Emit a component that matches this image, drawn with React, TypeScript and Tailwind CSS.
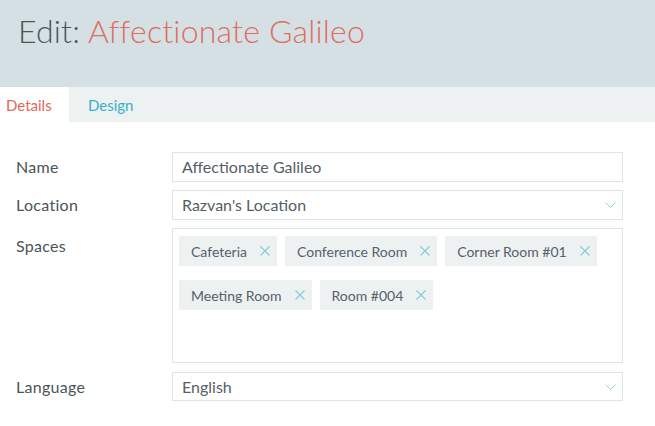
import React from "react";

const font = { fontFamily: "Lato, 'Open Sans', sans-serif" };

function XIcon() {
  return (
    <svg width="10" height="10" viewBox="0 0 10 10" className="ml-[13px] shrink-0">
      <path d="M0.5 0.5 L9.5 9.5 M9.5 0.5 L0.5 9.5" stroke="#86cbd9" strokeWidth="1.1" fill="none" />
    </svg>
  );
}

function Chevron() {
  return (
    <svg width="11" height="6" viewBox="0 0 11 6" className="shrink-0">
      <path d="M0.5 0.5 L5.5 5.5 L10.5 0.5" stroke="#9ad4e0" strokeWidth="1" fill="none" />
    </svg>
  );
}

function Tag({ label }: { label: string }) {
  return (
    <div className="flex h-[30px] items-center bg-[#edf1f2] pl-[12px] pr-[7px] text-[14px] text-[#56616a]">
      <span>{label}</span>
      <XIcon />
    </div>
  );
}

export default function App() {
  return (
    <div className="h-[426px] w-[655px] overflow-hidden bg-white" style={font}>
      <div className="h-[87px] bg-[#d5e0e5] pl-[18px] pt-[11px]">
        <h1 className="text-[32px] font-light leading-[40px] tracking-[0.2px]">
          <span className="text-[#4a5459]">Edit: </span>
          <span className="text-[#e06d5e]">Affectionate Galileo</span>
        </h1>
      </div>
      <div className="flex h-[35px] bg-[#edf1f2] pt-[2px] text-[15px]">
        <div className="-mt-[2px] flex w-[69px] items-center bg-white pl-[6px] pt-[2px] text-[#e0675a]">Details</div>
        <div className="flex items-center pl-[19px] text-[#3aaecb]">Design</div>
      </div>
      <div className="flex flex-col pl-[16px] pr-[32px] pt-[30px] text-[16px] text-[#4a5459]">
        <div className="flex items-center">
          <div className="w-[156px] tracking-[0.3px]">Name</div>
          <div className="flex h-[30px] flex-1 items-center border border-[#dde5e9] px-[9px] text-[#555f66]">
            Affectionate Galileo
          </div>
        </div>
        <div className="mt-[8px] flex items-center">
          <div className="w-[156px] tracking-[0.3px]">Location</div>
          <div className="flex h-[30px] flex-1 items-center justify-between border border-[#dde5e9] pl-[9px] pr-[6px] text-[#555f66]">
            <span>Razvan's Location</span>
            <Chevron />
          </div>
        </div>
        <div className="mt-[8px] flex items-start">
          <div className="w-[156px] pt-[6px] tracking-[0.3px]">Spaces</div>
          <div className="flex h-[135px] flex-1 flex-wrap content-start gap-x-[8px] gap-y-[14px] border border-[#dde5e9] px-[6px] pt-[7px]">
            <Tag label="Cafeteria" />
            <Tag label="Conference Room" />
            <Tag label="Corner Room #01" />
            <Tag label="Meeting Room" />
            <Tag label="Room #004" />
          </div>
        </div>
        <div className="mt-[9px] flex items-center">
          <div className="w-[156px] tracking-[0.3px]">Language</div>
          <div className="flex h-[29px] flex-1 items-center justify-between border border-[#dde5e9] pl-[9px] pr-[6px] text-[#555f66]">
            <span>English</span>
            <Chevron />
          </div>
        </div>
      </div>
    </div>
  );
}
